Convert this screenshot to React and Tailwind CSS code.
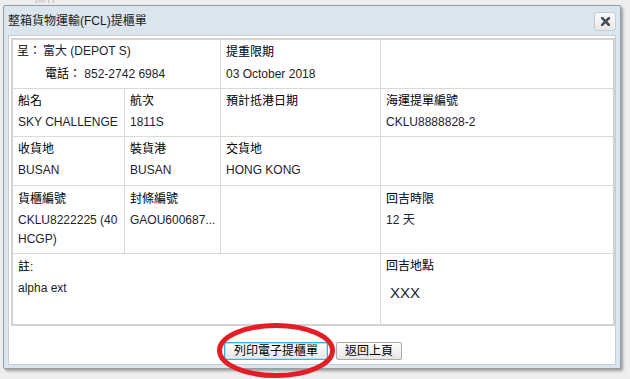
import React from 'react';

const FONT = '"Liberation Sans", Arial, "Noto Sans CJK TC", sans-serif';

function Cell({ label, value, className = '', valueClassName = '', children }) {
  return (
    <div className={`border-[#d9d9d9] px-[5px] pt-[3px] ${className}`}>
      {label && <div className="leading-[18px] text-black">{label}</div>}
      {value && (
        <div className={`mt-[3px] leading-[19px] text-[#1c2330] ${valueClassName}`}>{value}</div>
      )}
      {children}
    </div>
  );
}

function CloseIcon() {
  return (
    <svg width="9" height="9" viewBox="0 0 9 9">
      <path d="M1 1 L8 8 M8 1 L1 8" stroke="#4a4f57" strokeWidth="2.6" strokeLinecap="square" />
    </svg>
  );
}

export default function App() {
  return (
    <div
      className="relative w-[630px] h-[379px] overflow-hidden bg-[#eeeeee] text-[12px]"
      style={{ fontFamily: FONT }}
    >
      {/* page behind the dialog */}
      <div className="pl-[34px] pt-0 -mt-[9px] text-[#b8b8b8] leading-[14px]">操作</div>

      {/* dialog window */}
      <div className="absolute left-[3px] top-[5px] w-[618px] h-[364px] flex flex-col border border-[#959ea7] rounded-[2px] bg-[#dbe5ee] px-[4px] pb-[3px] shadow-[2px_2px_3px_rgba(0,0,0,0.35)]">
        <div className="h-[29px] flex items-center justify-between pl-0 pr-0">
          <span className="text-[#1a1a1a] leading-[16px] pt-[1px]">整箱貨物運輸(FCL)提櫃單</span>
          <button className="w-[22px] h-[19px] mt-[2px] flex items-center justify-center rounded-[3px] border border-[#c6ccd2] bg-linear-to-b from-[#fbfbfb] to-[#e8e8e8]">
            <CloseIcon />
          </button>
        </div>

        <div className="flex-1 bg-white border border-[#c5ced6] pl-[2px] pt-[2px]">
          <div className="w-[604px] border-2 border-[#d3d3d3] grid grid-cols-[112px_96px_160px_232px] grid-rows-[49px_48px_49px_68px_70px]">
            {/* row 1 */}
            <div className="col-span-2 border-r border-b border-[#d9d9d9] px-[4px] pt-[2px]">
              <div className="leading-[18px] text-black">
                呈：<span className="ml-[2px] text-[#1c2330]">富大 (DEPOT S)</span>
              </div>
              <div className="mt-[5px] pl-[28px] leading-[18px] text-black">
                電話： <span className="text-[#1c2330]">852-2742 6984</span>
              </div>
            </div>
            <Cell className="border-r border-b pt-[2px]" label="提重限期" value="03 October 2018" valueClassName="mt-[4px]" />
            <Cell className="border-b" />

            {/* row 2 */}
            <Cell className="border-r border-b" label="船名" value="SKY CHALLENGE" />
            <Cell className="border-r border-b" label="航次" value="1811S" />
            <Cell className="border-r border-b" label="預計抵港日期" />
            <Cell className="border-b" label="海運提單編號" value="CKLU8888828-2" />

            {/* row 3 */}
            <Cell className="border-r border-b" label="收貨地" value="BUSAN" />
            <Cell className="border-r border-b" label="裝貨港" value="BUSAN" />
            <Cell className="border-r border-b" label="交貨地" value="HONG KONG" />
            <Cell className="border-b" />

            {/* row 4 */}
            <Cell className="border-r border-b pt-[4px]" label="貨櫃編號" value="CKLU8222225 (40 HCGP)" />
            <Cell className="border-r border-b pt-[4px]" label="封條編號" value="GAOU600687..." />
            <Cell className="border-r border-b" />
            <Cell className="border-b pt-[4px]" label="回吉時限" value="12 天" />

            {/* row 5 */}
            <Cell className="col-span-3 border-r pt-[4px]" label="註:" value="alpha ext" />
            <Cell className="pt-[3px]" label="回吉地點">
              <div className="mt-[8px] pl-[4px] text-[15px] leading-[20px] text-[#1c2330]">XXX</div>
            </Cell>
          </div>

          <div className="flex justify-center gap-[8px] pt-[16px]">
            <button className="h-[18px] px-[9px] rounded-[2px] border border-[#36b4ea] bg-linear-to-b from-[#fefefe] to-[#e7e7e7] leading-[14px] text-black shadow-[inset_0_0_0_1px_#b5e3f6]">
              列印電子提櫃單
            </button>
            <button className="h-[18px] px-[8px] rounded-[2px] border border-[#acacac] bg-linear-to-b from-[#fefefe] to-[#e5e5e5] leading-[14px] text-black">
              返回上頁
            </button>
          </div>
        </div>
      </div>

      {/* red annotation ring */}
      <svg className="absolute left-[214px] top-[320px]" width="124" height="62" viewBox="0 0 124 62">
        <ellipse cx="62" cy="30.5" rx="56.5" ry="25" fill="none" stroke="#e41d27" strokeWidth="5" />
      </svg>
    </div>
  );
}
